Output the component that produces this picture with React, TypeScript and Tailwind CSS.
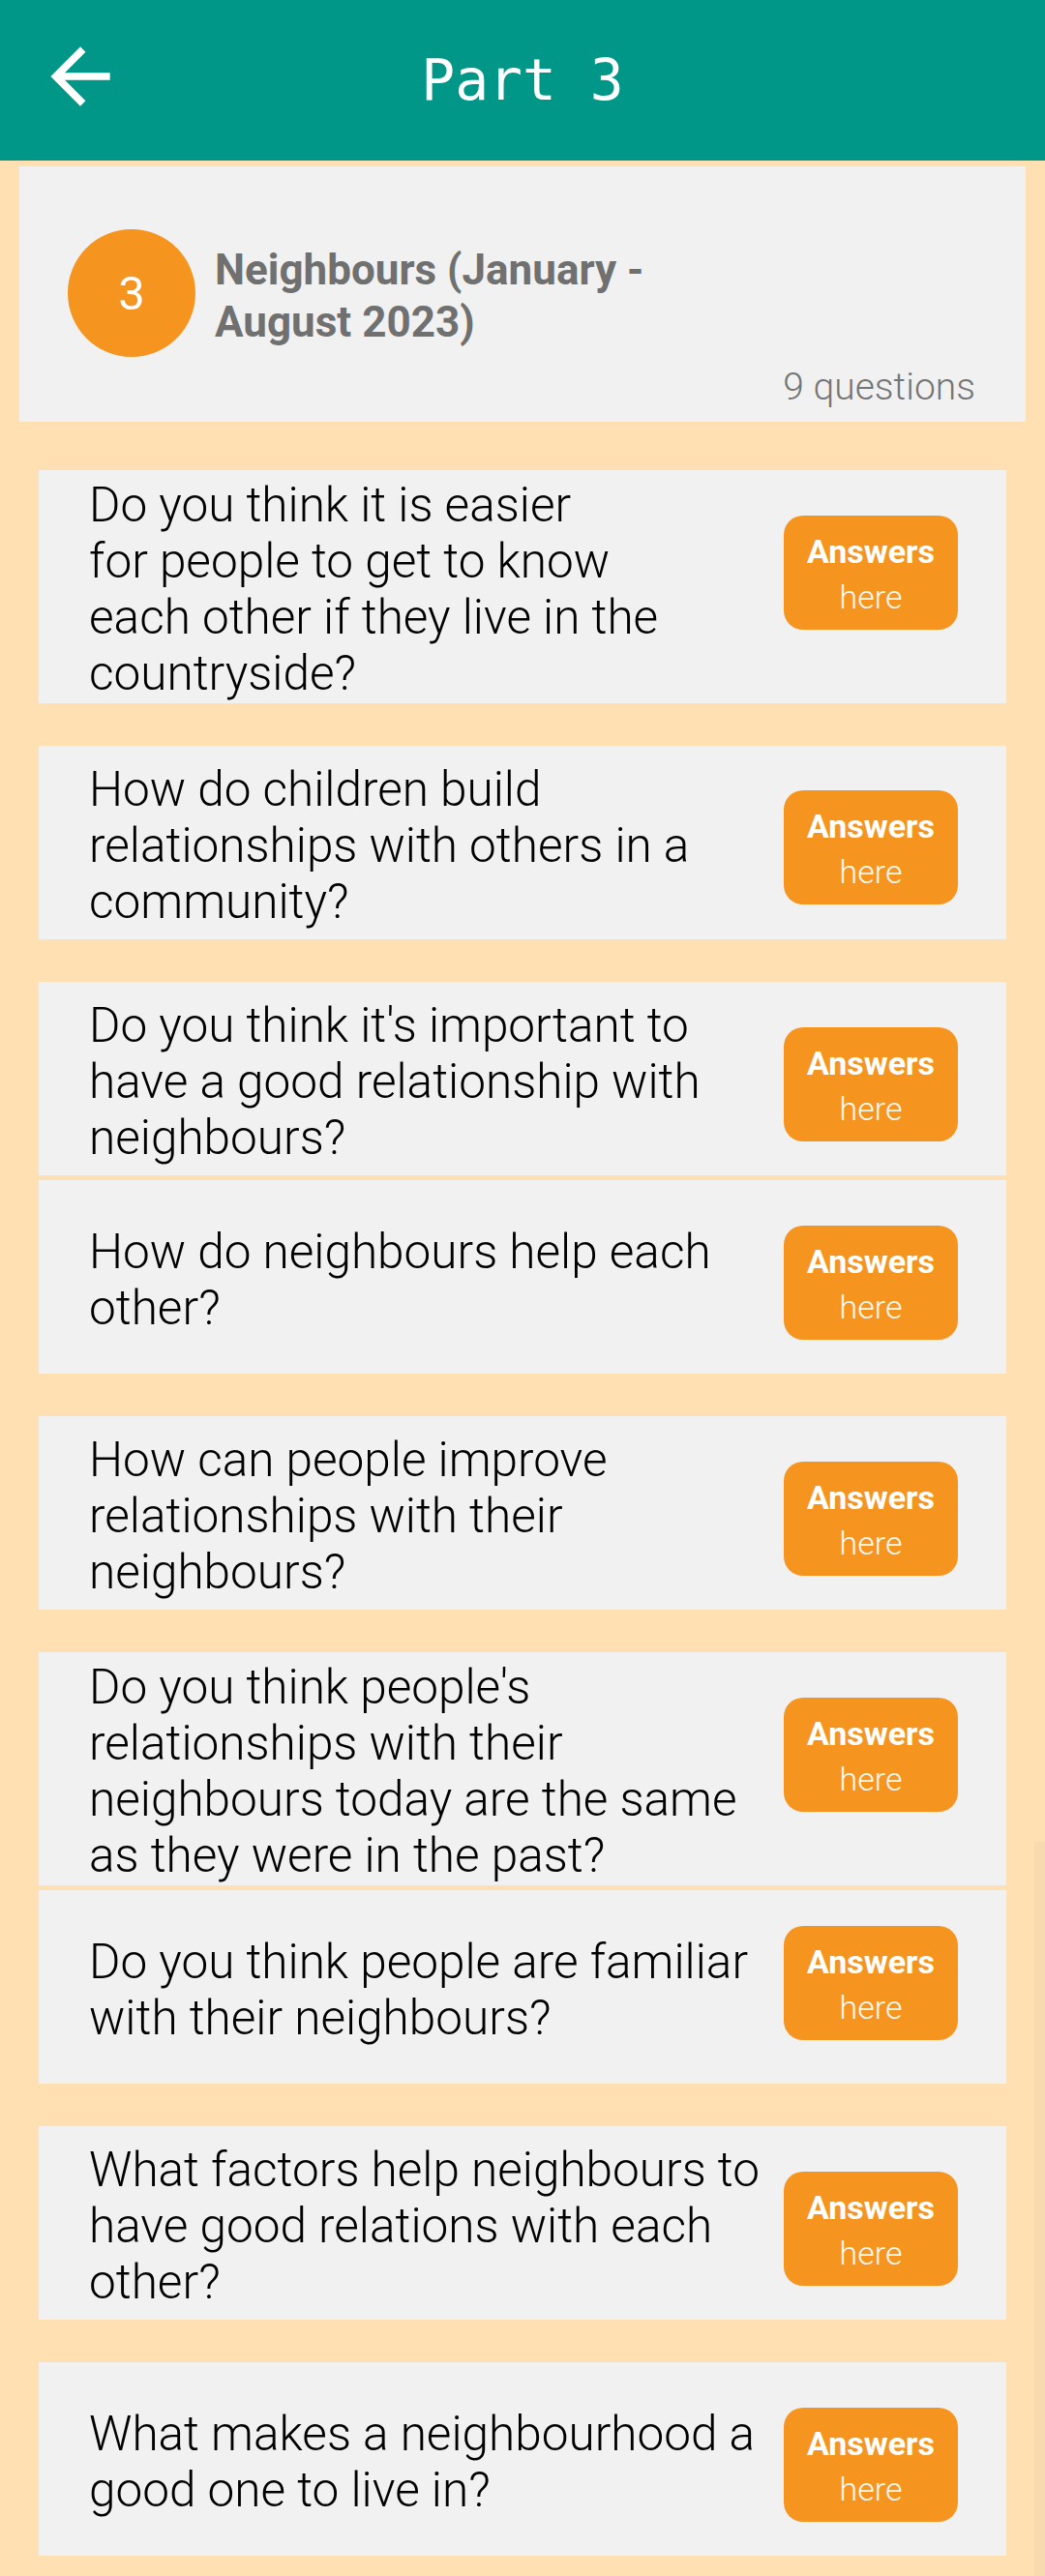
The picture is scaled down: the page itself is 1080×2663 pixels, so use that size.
import React from "react";

type Q = { lines: string[]; mt: string; btnMt: string };

const questions: Q[] = [
  {
    lines: [
      "Do you think it is easier",
      "for people to get to know",
      "each other if they live in the",
      "countryside?",
    ],
    mt: "mt-[50px]",
    btnMt: "mt-[47px]",
  },
  {
    lines: ["How do children build", "relationships with others in a", "community?"],
    mt: "mt-[44px]",
    btnMt: "mt-[46px]",
  },
  {
    lines: ["Do you think it's important to", "have a good relationship with", "neighbours?"],
    mt: "mt-[44px]",
    btnMt: "mt-[47px]",
  },
  {
    lines: ["How do neighbours help each", "other?"],
    mt: "mt-[5px]",
    btnMt: "mt-[47px]",
  },
  {
    lines: ["How can people improve", "relationships with their", "neighbours?"],
    mt: "mt-[44px]",
    btnMt: "mt-[47px]",
  },
  {
    lines: [
      "Do you think people's",
      "relationships with their",
      "neighbours today are the same",
      "as they were in the past?",
    ],
    mt: "mt-[44px]",
    btnMt: "mt-[47px]",
  },
  {
    lines: ["Do you think people are familiar", "with their neighbours?"],
    mt: "mt-[5px]",
    btnMt: "mt-[37px]",
  },
  {
    lines: ["What factors help neighbours to", "have good relations with each", "other?"],
    mt: "mt-[44px]",
    btnMt: "mt-[47px]",
  },
  {
    lines: ["What makes a neighbourhood a", "good one to live in?"],
    mt: "mt-[44px]",
    btnMt: "mt-[47px]",
  },
];

function QuestionCard({ q }: { q: Q }) {
  return (
    <div className={`${q.mt} mx-[40px] flex min-h-[200px] bg-[#f1f1f1]`}>
      <div className="flex flex-1 items-center pl-[52px] pt-[7px] pb-[2px]">
        <p className="whitespace-nowrap text-[49.5px] font-light leading-[58px] text-black">
          {q.lines.map((l, i) => (
            <React.Fragment key={i}>
              {l}
              {i < q.lines.length - 1 && <br />}
            </React.Fragment>
          ))}
        </p>
      </div>
      <div
        className={`${q.btnMt} mr-[50px] flex h-[118px] w-[180px] shrink-0 flex-col items-center justify-center self-start rounded-[20px] bg-[#f69420] pt-[3px]`}
      >
        <span className="text-[34px] font-bold leading-[47px] text-white">Answers</span>
        <span className="text-[34px] font-light leading-[47px] text-[#fff8ee]">here</span>
      </div>
    </div>
  );
}

export default function App() {
  return (
    <div className="relative min-h-[2663px] bg-[#ffe0b2] font-['Roboto',sans-serif]">
      {/* Header */}
      <header className="flex h-[166px] items-center bg-[#009688]">
        <div className="flex w-[129px] items-center pl-[37px]">
          <svg
            viewBox="0 0 24 24"
            className="mb-[9px] h-[92px] w-[92px]"
            fill="#ffffff"
          >
            <path d="M20 11H7.83l5.59-5.59L12 4l-8 8 8 8 1.41-1.41L7.83 13H20v-2z" />
          </svg>
        </div>
        <h1 className="flex-1 text-center font-['DejaVu_Sans_Mono',monospace] text-[58px] font-normal leading-[68px] text-white">
          Part 3
        </h1>
        <div className="w-[129px]" />
      </header>

      {/* Top card */}
      <section className="mx-[20px] mt-[6px] bg-[#f1f1f1] pl-[50px] pr-[52px] pt-[65px] pb-[13px]">
        <div className="flex items-center">
          <div className="flex h-[132px] w-[132px] shrink-0 items-center justify-center rounded-full bg-[#f69420]">
            <span className="text-[49px] font-normal leading-none text-white">3</span>
          </div>
          <h2 className="ml-[20px] mt-[6px] text-[44px] font-bold leading-[54px] text-[#707070]">
            Neighbours (January -<br />
            August 2023)
          </h2>
        </div>
        <p className="mt-[8px] text-right text-[39px] font-light leading-[46px] text-[#757575]">
          9 questions
        </p>
      </section>

      {questions.map((q, i) => (
        <QuestionCard key={i} q={q} />
      ))}

      {/* Scroll indicator */}
      <div className="absolute right-0 top-[1904px] bottom-0 w-[11px] bg-[#f8dab0]" />
    </div>
  );
}
